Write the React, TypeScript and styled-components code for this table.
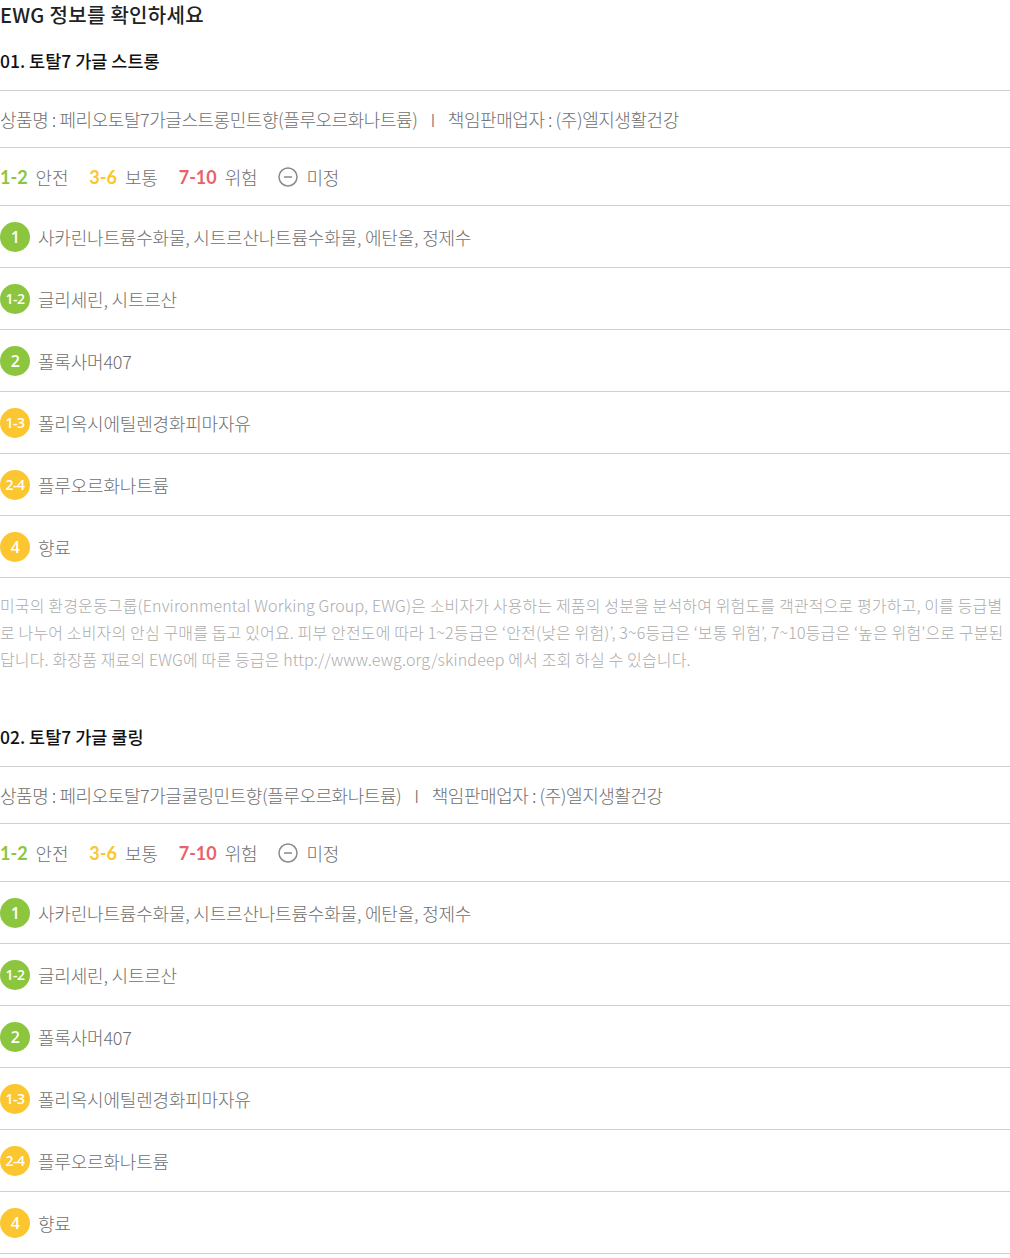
import React from 'react';
import styled, { createGlobalStyle } from 'styled-components';

const GlobalStyle = createGlobalStyle`
  html, body {
    margin: 0;
    padding: 0;
    background: #fff;
  }
  body {
    font-family: 'Noto Sans CJK KR', 'Noto Sans', sans-serif;
    color: #666;
  }
`;

const GREEN = '#8cc63f';
const YELLOW = '#fcc630';
const RED = '#e8626a';

const Page = styled.div`
  width: 1010px;
`;

const Title = styled.h1`
  margin: 0;
  font-size: 20px;
  line-height: 29px;
  font-weight: 500;
  color: #222;
  letter-spacing: 0.3px;
`;

const Section = styled.section<{ $first?: boolean }>`
  padding-top: ${(p) => (p.$first ? '20px' : '52px')};
`;

const Heading = styled.h2`
  margin: 0 0 17px;
  font-size: 17.5px;
  line-height: 24px;
  font-weight: 500;
  color: #111;
  letter-spacing: 0;
`;

const Row = styled.div<{ $h: number; $tight?: boolean }>`
  display: flex;
  align-items: center;
  height: ${(p) => p.$h}px;
  border-top: 1px solid #cfcfcf;
  box-sizing: content-box;
  font-size: 18px;
  font-weight: 300;
  color: #6f6f6f;
  letter-spacing: ${(p) => (p.$tight ? '-0.45px' : '-0.2px')};
  white-space: nowrap;

  &:last-child {
    border-bottom: 1px solid #cfcfcf;
  }
`;

const Divider = styled.span`
  margin: 0 13px;
`;

const LegendItem = styled.span`
  display: flex;
  align-items: center;
  gap: 8px;
  margin-right: 21px;
`;

const Grade = styled.b<{ $color: string }>`
  font-family: 'Lato', 'Noto Sans', sans-serif;
  font-weight: 700;
  font-size: 18px;
  color: ${(p) => p.$color};
  letter-spacing: 0;
`;

const Badge = styled.span<{ $color: string; $small?: boolean }>`
  display: flex;
  align-items: center;
  justify-content: center;
  width: 30px;
  height: 30px;
  border-radius: 50%;
  margin-right: 8px;
  flex-shrink: 0;
  background: ${(p) => p.$color};
  color: #fff;
  font-family: 'Open Sans', 'Noto Sans', sans-serif;
  font-weight: 600;
  font-size: ${(p) => (p.$small ? '14px' : '16px')};
  letter-spacing: -0.5px;
`;

const Note = styled.p`
  margin: 0;
  padding-top: 14px;
  font-size: 16px;
  line-height: 27px;
  font-weight: 300;
  color: #acacac;
  letter-spacing: 0.15px;
`;

const MinusCircle = () => (
  <svg width="20" height="20" viewBox="0 0 20 20" fill="none">
    <circle cx="10" cy="10" r="9" stroke="#8a8a8a" strokeWidth="1.5" />
    <line x1="6" y1="10" x2="14" y2="10" stroke="#8a8a8a" strokeWidth="1.5" />
  </svg>
);

type Ingredient = { grade: string; color: string; name: string };

const ingredients: Ingredient[] = [
  { grade: '1', color: GREEN, name: '사카린나트륨수화물, 시트르산나트륨수화물, 에탄올, 정제수' },
  { grade: '1-2', color: GREEN, name: '글리세린, 시트르산' },
  { grade: '2', color: GREEN, name: '폴록사머407' },
  { grade: '1-3', color: YELLOW, name: '폴리옥시에틸렌경화피마자유' },
  { grade: '2-4', color: YELLOW, name: '플루오르화나트륨' },
  { grade: '4', color: YELLOW, name: '향료' },
];

const products = [
  { no: '01', title: '토탈7 가글 스트롱', full: '페리오토탈7가글스트롱민트향(플루오르화나트륨)' },
  { no: '02', title: '토탈7 가글 쿨링', full: '페리오토탈7가글쿨링민트향(플루오르화나트륨)' },
];

const ProductBlock: React.FC<{ no: string; title: string; full: string; first?: boolean }> = ({
  no,
  title,
  full,
  first,
}) => (
  <Section $first={first}>
    <Heading>
      {no}. {title}
    </Heading>
    <div>
      <Row $h={56} $tight>
        상품명 : {full}
        <Divider>I</Divider>
        책임판매업자 : (주)엘지생활건강
      </Row>
      <Row $h={57}>
        <LegendItem>
          <Grade $color={GREEN}>1-2</Grade>안전
        </LegendItem>
        <LegendItem>
          <Grade $color={YELLOW}>3-6</Grade>보통
        </LegendItem>
        <LegendItem>
          <Grade $color={RED}>7-10</Grade>위험
        </LegendItem>
        <LegendItem>
          <MinusCircle />
          미정
        </LegendItem>
      </Row>
      {ingredients.map((item) => (
        <Row $h={61} key={item.grade}>
          <Badge $color={item.color} $small={item.grade.length > 1}>
            {item.grade}
          </Badge>
          {item.name}
        </Row>
      ))}
    </div>
    {first && (
      <Note>
        미국의 환경운동그룹(Environmental Working Group, EWG)은 소비자가 사용하는 제품의 성분을 분석하여 위험도를
        객관적으로 평가하고, 이를 등급별로 나누어 소비자의 안심 구매를 돕고 있어요. 피부 안전도에 따라 1~2등급은
        ‘안전(낮은 위험)’, 3~6등급은 ‘보통 위험’, 7~10등급은 ‘높은 위험’으로 구분된답니다. 화장품 재료의 EWG에 따른
        등급은 http://www.ewg.org/skindeep 에서 조회 하실 수 있습니다.
      </Note>
    )}
  </Section>
);

const App: React.FC = () => (
  <Page>
    <GlobalStyle />
    <Title>EWG 정보를 확인하세요</Title>
    {products.map((p, i) => (
      <ProductBlock key={p.no} {...p} first={i === 0} />
    ))}
  </Page>
);

export default App;
